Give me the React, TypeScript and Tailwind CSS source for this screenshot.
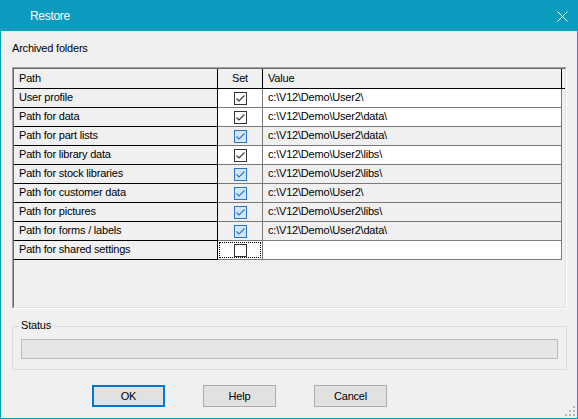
import React from "react";

type Row = { path: string; value: string; checked: boolean; blue: boolean };

const rows: Row[] = [
  { path: "User profile", value: "c:\\V12\\Demo\\User2\\", checked: true, blue: false },
  { path: "Path for data", value: "c:\\V12\\Demo\\User2\\data\\", checked: true, blue: false },
  { path: "Path for part lists", value: "c:\\V12\\Demo\\User2\\data\\", checked: true, blue: true },
  { path: "Path for library data", value: "c:\\V12\\Demo\\User2\\libs\\", checked: true, blue: false },
  { path: "Path for stock libraries", value: "c:\\V12\\Demo\\User2\\libs\\", checked: true, blue: true },
  { path: "Path for customer data", value: "c:\\V12\\Demo\\User2\\", checked: true, blue: true },
  { path: "Path for pictures", value: "c:\\V12\\Demo\\User2\\libs\\", checked: true, blue: true },
  { path: "Path for forms / labels", value: "c:\\V12\\Demo\\User2\\data\\", checked: true, blue: true },
  { path: "Path for shared settings", value: "", checked: false, blue: false },
];

function Check({ checked, blue }: { checked: boolean; blue: boolean }) {
  return (
    <span
      className={
        blue
          ? "w-[13px] h-[13px] border border-[#2a74c4] bg-[#d3e6f7] flex items-center justify-center"
          : "w-[13px] h-[13px] border border-[#333333] bg-white flex items-center justify-center"
      }
    >
      {checked && (
        <svg width="11" height="11" viewBox="0 0 11 11">
          <path
            d="M1.5 5.5 L4 8 L9.5 2.5"
            fill="none"
            stroke={blue ? "#2a74c4" : "#333333"}
            strokeWidth="1.1"
          />
        </svg>
      )}
    </span>
  );
}

function Button({ label, primary }: { label: string; primary?: boolean }) {
  return (
    <button
      className={
        primary
          ? "w-[73px] h-[22px] bg-[#e1e1e1] border-2 border-[#0078d7] text-[11px] text-black"
          : "w-[73px] h-[22px] bg-[#e1e1e1] border border-[#adadad] text-[11px] text-black"
      }
    >
      {label}
    </button>
  );
}

export default function App() {
  return (
    <div
      className="relative w-[578px] h-[419px] bg-[#f0f0f0] border border-[#0a9bbf] flex flex-col text-[11px] text-black tracking-[-0.2px]"
      style={{ fontFamily: '"Liberation Sans", Arial, sans-serif' }}
    >
      {/* Title bar */}
      <div className="h-[30px] bg-[#0a9bbf] flex items-center justify-between pl-[29px] pr-[9px]">
        <span className="text-white text-[12px] tracking-[-0.3px]">Restore</span>
        <svg width="11" height="11" viewBox="0 0 11 11">
          <path d="M0.5 0.5 L10.5 10.5 M10.5 0.5 L0.5 10.5" stroke="white" strokeWidth="1" />
        </svg>
      </div>

      <div className="ml-[11px] mt-[11px] h-[13px] leading-[13px]">Archived folders</div>

      {/* Grid control */}
      <div className="ml-[11px] mt-[12px] w-[555px] h-[242px] border-t border-l border-[#a0a0a0] border-r-white border-b-white border-r border-b">
        <div className="w-full h-full border-t border-l border-[#696969] border-r border-b border-r-[#e3e3e3] border-b-[#e3e3e3]">
          <div className="flex h-[20px] border-b border-black bg-[#f0f0f0]">
            <div className="w-[204px] border-r border-black pl-[5px] pb-[1px] flex items-center">Path</div>
            <div className="w-[45px] border-r border-black pb-[1px] flex items-center justify-center">Set</div>
            <div className="w-[299px] border-r border-black pl-[5px] pb-[1px] flex items-center">Value</div>
          </div>
          {rows.map((r, i) => {
            const last = i === rows.length - 1;
            const cellBg = r.blue ? "bg-[#f0f0f0]" : "bg-white";
            return (
              <div key={r.path} className="flex h-[19px]">
                <div className="w-[204px] border-r border-b border-black bg-[#f0f0f0] pl-[5px] pb-[1px] flex items-center">
                  {r.path}
                </div>
                <div className={`w-[45px] border-r border-b border-[#7a7a7a] ${cellBg} relative flex items-center justify-center`}>
                  {last && <span className="absolute inset-[1px] border border-dotted border-black" />}
                  <Check checked={r.checked} blue={r.blue} />
                </div>
                <div className={`w-[299px] border-r border-b border-[#7a7a7a] ${cellBg} pl-[5px] pb-[1px] flex items-center`}>
                  {r.value}
                </div>
              </div>
            );
          })}
        </div>
      </div>

      {/* Status group */}
      <div className="relative ml-[11px] mt-[17px] w-[555px] h-[44px] border border-[#dcdcdc] px-[8px] pt-[12px]">
        <span className="absolute left-[6px] top-[-8px] bg-[#f0f0f0] px-[2px] leading-[13px]">Status</span>
        <div className="h-[20px] border border-[#bcbcbc] bg-[#e6e6e6]" />
      </div>

      {/* Buttons */}
      <div className="flex ml-[91px] mt-[15px] gap-[38px]">
        <Button label="OK" primary />
        <Button label="Help" />
        <Button label="Cancel" />
      </div>

      {/* Resize grip */}
      <svg className="absolute right-[2px] bottom-[2px]" width="10" height="10" viewBox="0 0 10 10">
        <rect x="8" y="0" width="2" height="2" fill="#b8b8b8" />
        <rect x="4" y="4" width="2" height="2" fill="#b8b8b8" />
        <rect x="8" y="4" width="2" height="2" fill="#b8b8b8" />
        <rect x="0" y="8" width="2" height="2" fill="#b8b8b8" />
        <rect x="4" y="8" width="2" height="2" fill="#b8b8b8" />
        <rect x="8" y="8" width="2" height="2" fill="#b8b8b8" />
      </svg>
    </div>
  );
}
